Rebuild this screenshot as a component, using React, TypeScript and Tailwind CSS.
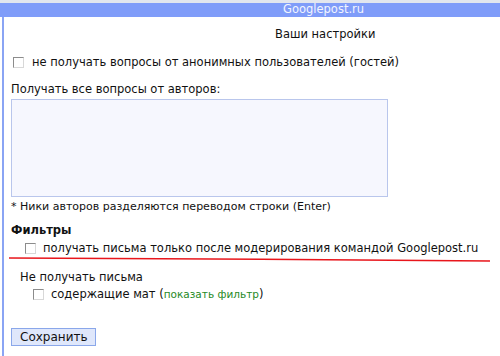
import React from "react";

function Box() {
  return (
    <span className="inline-block h-[11px] w-[11px] shrink-0 border border-[#8c8c8c] border-r-[#d8d8d8] border-b-[#d8d8d8] bg-white" />
  );
}

export default function App() {
  return (
    <div className="h-[356px] w-[500px] overflow-hidden bg-white text-[11.5px] text-[#111] [font-family:'DejaVu_Sans',Verdana,sans-serif]">
      <div className="h-[3px] bg-[#e2e6ee]" />
      <div className="flex h-[14px] items-center bg-[#7f9cf9] pl-[283px] leading-none text-[#f2f5ff]">
        Googlepost.ru
      </div>
      <div className="ml-[2px] h-[339px] border-l-2 border-[#8aa4f4] pl-[7px]">
        <div className="pt-[9px] pl-[264px] leading-[16px]">Ваши настройки</div>

        <div className="mt-[12px] flex items-center gap-[8px] pl-[2px] leading-[16px]">
          <Box />
          <span>не получать вопросы от анонимных пользователей (гостей)</span>
        </div>

        <div className="mt-[11px] leading-[16px]">Получать все вопросы от авторов:</div>
        <div className="mt-[2px] h-[98px] w-[377px] border border-[#b9c6ec] bg-[#f6f7fe]" />
        <div className="mt-[3px] text-[11px] leading-[14px]">
          * Ники авторов разделяются переводом строки (Enter)
        </div>

        <div className="mt-[8px] font-bold leading-[16px]">Фильтры</div>
        <div className="mt-[2px] flex items-center gap-[7px] pl-[14px] leading-[16px]">
          <Box />
          <span>получать письма только после модерирования командой Googlepost.ru</span>
        </div>
        <svg width="490" height="8" className="-mt-[1px] -ml-[3px] block">
          <path d="M1 3 C 150 3.5, 330 4.5, 482 6" stroke="#e8161c" strokeWidth="1.6" fill="none" />
        </svg>

        <div className="mt-[6px] pl-[9px] leading-[16px]">Не получать письма</div>
        <div className="mt-[1px] flex items-center gap-[7px] pl-[22px] leading-[16px]">
          <Box />
          <span>
            содержащие мат (
            <span className="text-[10.5px] text-[#1f8a1f]">показать фильтр</span>)
          </span>
        </div>

        <button className="mt-[26px] h-[18px] w-[85px] border border-[#8aa7ea] bg-[#dfe7fb] pl-[8px] text-left text-[12px] leading-none text-[#111]">
          Сохранить
        </button>
      </div>
    </div>
  );
}
